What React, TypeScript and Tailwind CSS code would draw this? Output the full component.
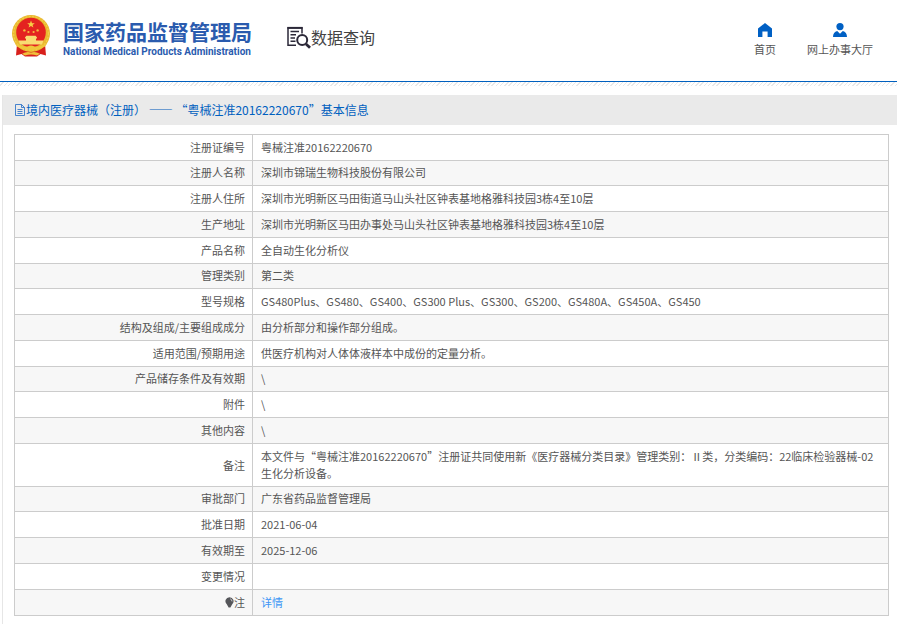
import React from 'react';

interface DetailRow {
  label: string;
  value: React.ReactNode;
}

const rows: DetailRow[] = [
  { label: '注册证编号', value: '粤械注准20162220670' },
  { label: '注册人名称', value: '深圳市锦瑞生物科技股份有限公司' },
  { label: '注册人住所', value: '深圳市光明新区马田街道马山头社区钟表基地格雅科技园3栋4至10层' },
  { label: '生产地址', value: '深圳市光明新区马田办事处马山头社区钟表基地格雅科技园3栋4至10层' },
  { label: '产品名称', value: '全自动生化分析仪' },
  { label: '管理类别', value: '第二类' },
  { label: '型号规格', value: 'GS480Plus、GS480、GS400、GS300 Plus、GS300、GS200、GS480A、GS450A、GS450' },
  { label: '结构及组成/主要组成成分', value: '由分析部分和操作部分组成。' },
  { label: '适用范围/预期用途', value: '供医疗机构对人体体液样本中成份的定量分析。' },
  { label: '产品储存条件及有效期', value: '\\' },
  { label: '附件', value: '\\' },
  { label: '其他内容', value: '\\' },
  {
    label: '备注',
    value:
      '本文件与“粤械注准20162220670”注册证共同使用新《医疗器械分类目录》管理类别：Ⅱ类，分类编码：22临床检验器械-02生化分析设备。',
  },
  { label: '审批部门', value: '广东省药品监督管理局' },
  { label: '批准日期', value: '2021-06-04' },
  { label: '有效期至', value: '2025-12-06' },
  { label: '变更情况', value: '' },
];

const Emblem = () => (
  <svg viewBox="0 0 38 42" className="h-[42px] w-[38px] shrink-0" aria-hidden="true">
    <path d="M5 29L4 40.5L9.5 39L13 41.5H25L28.5 39L34 40.5L33 29Z" fill="#d8201c" />
    <ellipse cx="19" cy="18.5" rx="19" ry="18.5" fill="#e9b92f" />
    <ellipse cx="19" cy="18.5" rx="17.4" ry="17" fill="none" stroke="#f3cd4a" strokeWidth="1.2" strokeDasharray="2 1.4" />
    <circle cx="19" cy="17.5" r="14.8" fill="#e42320" />
    <path d="M19 5.6l1 2.6h2.8l-2.2 1.7.8 2.7-2.4-1.6-2.4 1.6.8-2.7-2.2-1.7H18z" fill="#f7cf46" />
    <circle cx="12.4" cy="15.4" r="1.2" fill="#f2bd3e" />
    <circle cx="25.6" cy="15.4" r="1.2" fill="#f2bd3e" />
    <circle cx="16.4" cy="17" r="1.1" fill="#f2bd3e" />
    <circle cx="21.6" cy="17" r="1.1" fill="#f2bd3e" />
    <path d="M13 22.4l1.4-1.6h9.2l1.4 1.6v1h-1v2.2h7.5l-1.5 4H8l-1.5-4H14v-2.2h-1z" fill="#f9dc72" />
    <path d="M3 28.5Q10 32 15.5 31.6Q19 29.4 22.5 31.6Q28 32 35 28.5L33 31.6Q28 34.6 23 34.4Q19 37 15 34.4Q10 34.6 5 31.6Z" fill="#f0c63c" />
    <path d="M10 38.8Q15 36 19 37.6Q23 36 28 38.8L25 40.4Q19 38.6 13 40.4Z" fill="#efc03a" />
  </svg>
);

const QueryIcon = () => (
  <svg viewBox="0 0 25 24" className="h-6 w-[25px] shrink-0" fill="none" stroke="#2b2838" aria-hidden="true">
    <path d="M16 8.5V3H2V20.2H10" strokeWidth="1.5" />
    <path d="M1.3 2.8H16.7" strokeWidth="1.8" />
    <path d="M4.5 6.5H13M4.5 9.8H10M4.5 13H9M4.5 16.3H9.5" strokeWidth="1.4" />
    <circle cx="16.2" cy="15" r="5" strokeWidth="2" />
    <path d="M20 19L24 22.8" strokeWidth="2.8" />
  </svg>
);

const HomeIcon = () => (
  <svg viewBox="0 0 14 14" className="h-3.5 w-3.5" fill="#0060c4" aria-hidden="true">
    <path d="M7 0L14 5.6V14H9.6V8.6H4.4V14H0V5.6Z" />
  </svg>
);

const UserIcon = () => (
  <svg viewBox="0 0 14 14" className="h-3.5 w-3.5" fill="#0060c4" aria-hidden="true">
    <circle cx="7" cy="3.6" r="3.6" />
    <path d="M0 14C0 10.4 1.6 8.6 4.2 7.9L7 10.8L9.8 7.9C12.4 8.6 14 10.4 14 14Z" />
  </svg>
);

const DocIcon = () => (
  <svg viewBox="0 0 11 12" className="h-3 w-[11px] shrink-0" fill="none" stroke="#1c68c5" aria-hidden="true">
    <path d="M.5 .5H6.5L9.5 3.5V11.5H.5ZM6.5 .5V3.5H9.5M2.5 5.5H7.5M2.5 7.5H7.5M2.5 9.5H7.5" strokeWidth=".8" />
  </svg>
);

const BulbIcon = () => (
  <svg viewBox="0 0 9 11" className="inline-block h-[11px] w-[9px] align-[-1px]" aria-hidden="true">
    <path d="M4.5 .2A4 4 0 0 1 7.2 7.2L5.4 10.6H3.6L1.8 7.2A4 4 0 0 1 4.5 .2Z" fill="#55565a" />
    <path d="M5.2 1.8Q7 2.4 7 4.4" fill="none" stroke="#d5d5d8" strokeWidth=".9" />
  </svg>
);

const cellClass = 'border border-[#ccc] py-1 align-middle';

export default function App() {
  return (
    <div
      lang="zh-CN"
      className="min-h-screen bg-white font-['Noto_Sans_CJK_SC',sans-serif] text-[11px] leading-[17px] text-[#555]"
    >
      {/* Header */}
      <header className="flex items-start justify-between border-b border-[#0060bf] pr-6 pb-[21px] pl-3">
        <div className="flex items-start pt-[15px]">
          <a href="#" className="flex items-start gap-[13px] text-[#2a5bae]">
            <Emblem />
            <div className="pt-[3px]">
              <div className="text-[21px] leading-[26px] font-bold">国家药品监督管理局</div>
              <div className="font-['Roboto',sans-serif] text-[10px] leading-4 font-bold">
                National Medical Products Administration
              </div>
            </div>
          </a>
          <div className="ml-[34px] flex items-center pt-[10px]">
            <QueryIcon />
            <h1 className="text-base leading-6 text-[#444]">数据查询</h1>
          </div>
        </div>
        <nav className="flex gap-[31px] pt-[23px] text-[#555]">
          <a href="#" className="flex flex-col items-center gap-1">
            <HomeIcon />
            首页
          </a>
          <a href="#" className="flex flex-col items-center gap-1">
            <UserIcon />
            网上办事大厅
          </a>
        </nav>
      </header>
      <div className="h-1 bg-[repeating-linear-gradient(135deg,#fff_0_2px,#e8e8e8_2px_3px)]" />

      {/* Detail panel */}
      <main className="mt-[9px] ml-0.5 border-l border-[#e6e6e6]">
        <h2 className="flex h-[30px] items-center bg-[#eaeaea] pl-3 text-xs text-[#0060bf]">
          <DocIcon />
          <span>境内医疗器械（注册） —— “粤械注准20162220670”基本信息</span>
        </h2>
        <div className="pt-[9px] pr-2 pb-2 pl-[11px]">
          <table className="w-full table-fixed border-collapse border border-[#ccc]">
            <colgroup>
              <col className="w-[238px]" />
              <col />
            </colgroup>
            <tbody>
              {rows.map((row) => (
                <tr key={row.label} className="even:bg-[#f7f7f7] [&:nth-child(4n+2)>*]:pt-[3px]">
                  <th className={`${cellClass} px-[7px] text-right font-normal`}>{row.label}</th>
                  <td className={`${cellClass} px-2`}>{row.value}</td>
                </tr>
              ))}
              <tr className="bg-[#f7f7f7]">
                <th className={`${cellClass} px-[7px] text-right font-normal`}>
                  <BulbIcon />注
                </th>
                <td className={`${cellClass} px-2`}>
                  <a href="#" className="text-[#3c96f5]">详情</a>
                </td>
              </tr>
            </tbody>
          </table>
        </div>
      </main>
    </div>
  );
}
